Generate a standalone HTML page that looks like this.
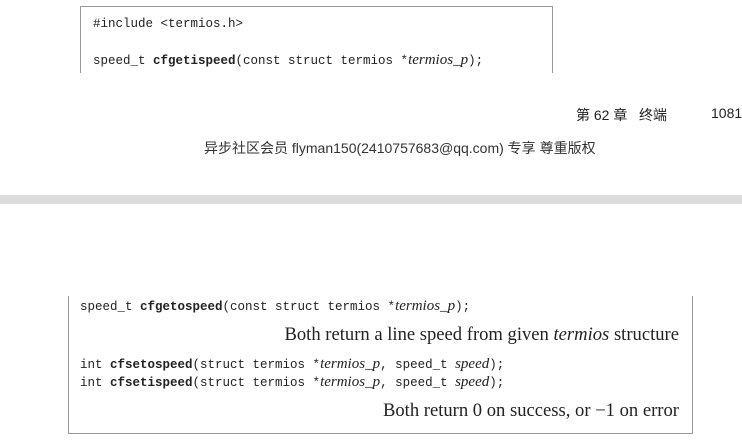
<!DOCTYPE html>
<html><head><meta charset="utf-8"><style>
body{margin:0;width:742px;height:445px;background:#fff;position:relative;overflow:hidden;font-family:"Liberation Sans","Noto Sans CJK SC",sans-serif;color:#222}
.a{position:absolute;white-space:pre}
.m{font-family:"Liberation Mono",monospace;font-size:12.5px;color:#222}
.m b{font-weight:bold}
.m i{font-family:"Liberation Serif",serif;font-style:italic;font-size:15px}
.s{font-family:"Liberation Serif",serif;font-size:18.6px;color:#222}
</style></head><body>
<div class="a" style="left:80px;top:6px;width:471px;height:66px;border:1px solid #999;border-bottom:none"></div>
<div class="a m" style="left:93px;top:17px">#include &lt;termios.h&gt;</div>
<div class="a m" style="left:93px;top:52px">speed_t <b>cfgetispeed</b>(const struct termios *<i>termios_p</i>);</div>
<div class="a" style="left:576px;top:105px;font-size:14px">第 62 章&nbsp;&nbsp;&nbsp;终端</div>
<div class="a" style="left:711px;top:105px;font-size:14px">1081</div>
<div class="a" style="left:204px;top:138px;font-size:14px;color:#333">异步社区会员 flyman150(2410757683@qq.com) 专享 尊重版权</div>
<div class="a" style="left:0;top:195px;width:742px;height:9px;background:#dcdcdc"></div>
<div class="a" style="left:68px;top:296px;width:623px;height:137px;border:1px solid #999;border-top:none"></div>
<div class="a m" style="left:80px;top:298px">speed_t <b>cfgetospeed</b>(const struct termios *<i>termios_p</i>);</div>
<div class="a s" style="right:63px;top:324px">Both return a line speed from given <i>termios</i> structure</div>
<div class="a m" style="left:80px;top:356px">int <b>cfsetospeed</b>(struct termios *<i>termios_p</i>, speed_t <i>speed</i>);</div>
<div class="a m" style="left:80px;top:374px">int <b>cfsetispeed</b>(struct termios *<i>termios_p</i>, speed_t <i>speed</i>);</div>
<div class="a s" style="right:63px;top:400px">Both return 0 on success, or −1 on error</div>
</body></html>
